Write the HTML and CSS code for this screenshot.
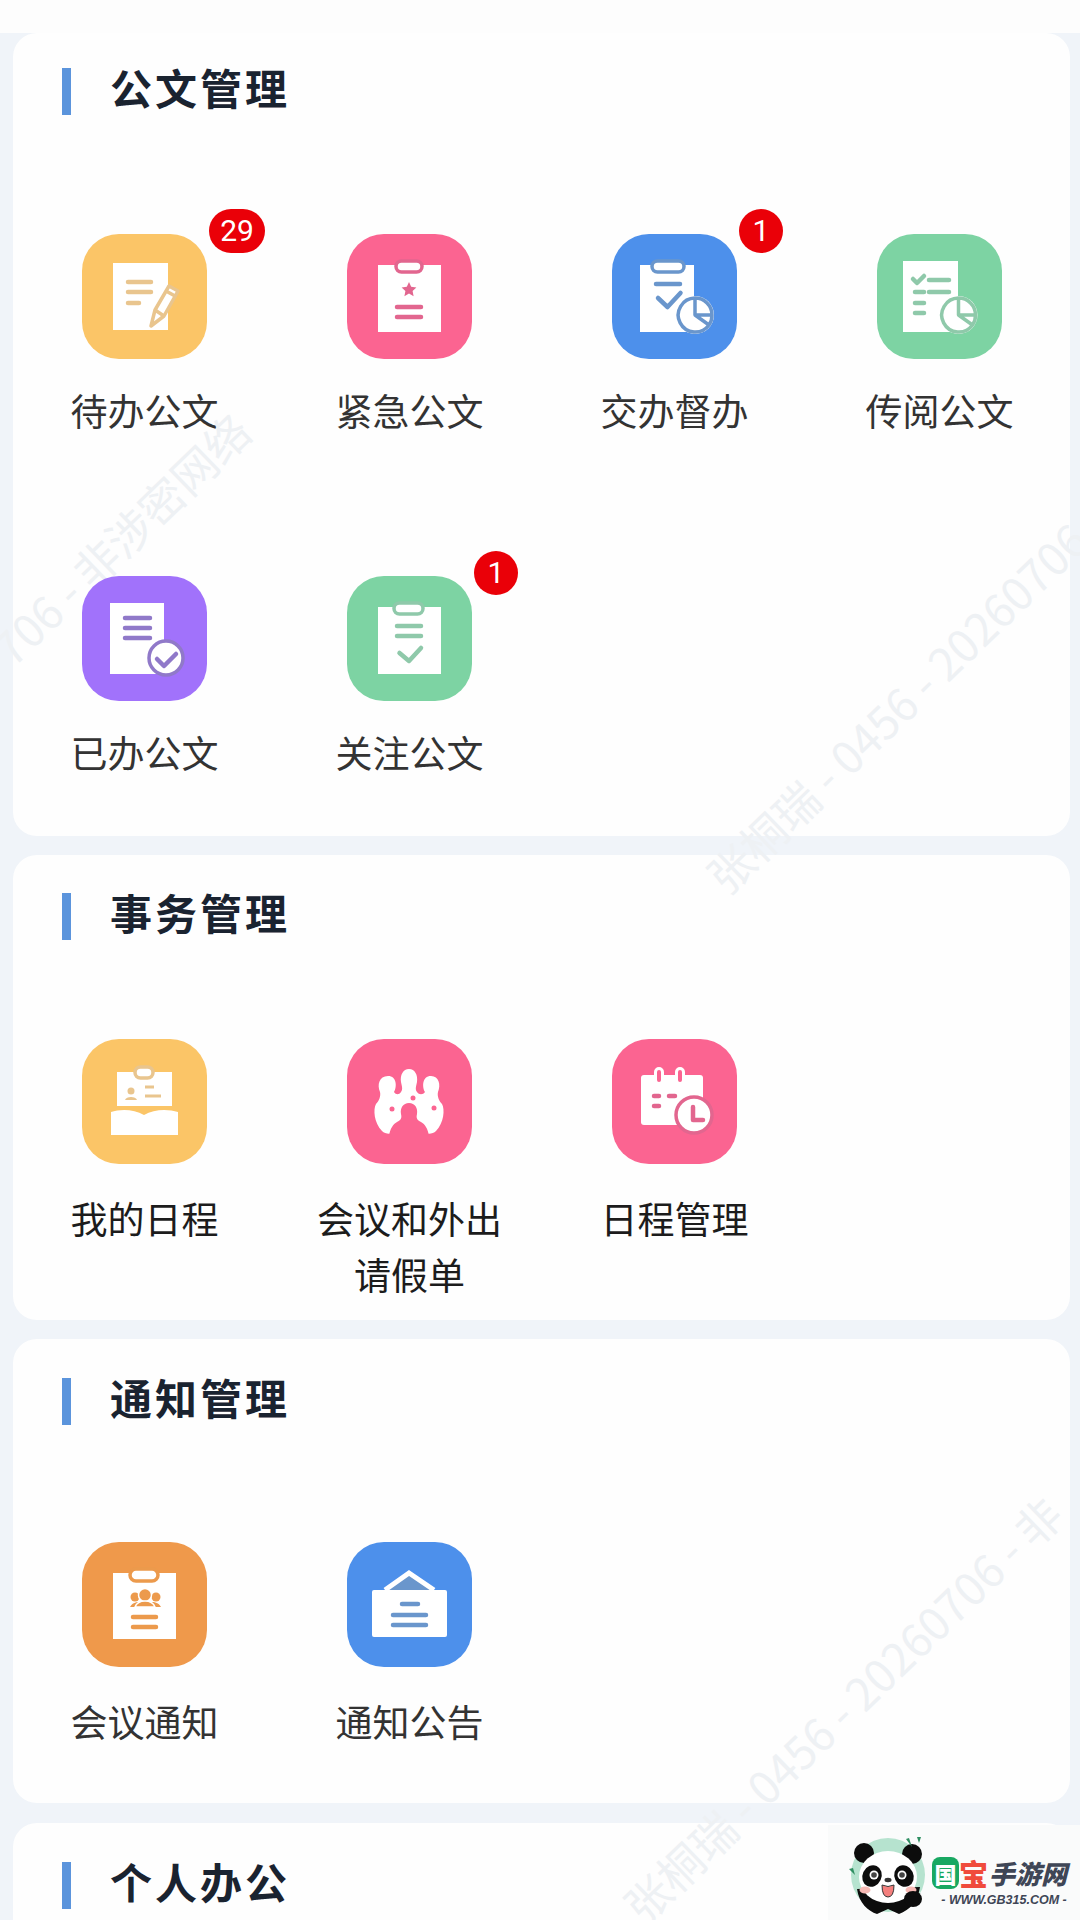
FILE: index.html
```html
<!DOCTYPE html>
<html lang="zh-CN">
<head>
    <meta charset="UTF-8">
    <meta name="viewport" content="width=device-width, initial-scale=1.0">
    <title>办公</title>
    <link rel="stylesheet" href="styles.css">
</head>
<body>
    <div class="page">
        <div class="topbar"></div>

        <section class="card card-doc">
            <h2 class="card-title">公文管理</h2>
            <div class="grid">
                <div class="item">
                    <div class="icon yellow">
                        <svg viewBox="0 0 125 125">
                            <path class="paper" d="M31 29H86V96H31Z"/>
                            <path class="line" d="M46 48H69M46 58H69M46 69H57"/>
                            <path class="thin" d="M73 76L87 52L96 57L82 82L69 92Z"/>
                            <path class="thin" d="M73 76L82 82M84 57L93 62"/>
                        </svg>
                        <span class="badge wide">29</span>
                    </div>
                    <p class="label">待办公文</p>
                </div>
                <div class="item">
                    <div class="icon pink">
                        <svg viewBox="0 0 125 125">
                            <path class="paper" d="M31 31H94V98H31Z"/>
                            <rect class="pill" x="49" y="27" width="26" height="11" rx="5.5"/>
                            <path class="solid" d="M62 48L64.2 52.8L69.4 53.4L65.6 57L66.6 62.2L62 59.6L57.4 62.2L58.4 57L54.6 53.4L59.8 52.8Z"/>
                            <path class="line" d="M50 73H74M50 83H74"/>
                        </svg>
                    </div>
                    <p class="label">紧急公文</p>
                </div>
                <div class="item">
                    <div class="icon blue">
                        <svg viewBox="0 0 125 125">
                            <path class="paper" d="M28 31H82V98H28Z"/>
                            <rect class="pill" x="40" y="27" width="32" height="11" rx="5.5"/>
                            <path class="line" d="M44 50H68"/>
                            <path class="line" d="M46 64L55.5 73L68.5 59"/>
                            <circle class="paper" cx="83" cy="81" r="19"/>
                            <path class="thin" d="M83 64A17 17 0 1 0 97 91M83 64A17 17 0 0 1 100 81H83V64M83 81L97 91A17 17 0 0 0 100 81"/>
                        </svg>
                        <span class="badge">1</span>
                    </div>
                    <p class="label">交办督办</p>
                </div>
                <div class="item">
                    <div class="icon green">
                        <svg viewBox="0 0 125 125">
                            <path class="paper" d="M26 27H81V98H26Z"/>
                            <path class="line" d="M36 45L40 49L47 42"/>
                            <path class="line" d="M52 46H72M38 58H47M52 58H72M38 69H47M38 79H47"/>
                            <circle class="paper" cx="81.500" cy="81" r="19"/>
                            <path class="thin" d="M81.500 64A17 17 0 1 0 95.500 91M81.500 64A17 17 0 0 1 98.500 81H81.500V64M81.500 81L95.500 91A17 17 0 0 0 98.500 81"/>
                        </svg>
                    </div>
                    <p class="label">传阅公文</p>
                </div>
                <div class="item">
                    <div class="icon purple">
                        <svg viewBox="0 0 125 125">
                            <path class="paper" d="M28 27H82V98H28Z"/>
                            <path class="line" d="M43 42H68M43 52H68M43 62H68"/>
                            <circle class="ring" cx="84" cy="82" r="17"/>
                            <path class="line" d="M75 83L82 90L94 78"/>
                        </svg>
                    </div>
                    <p class="label">已办公文</p>
                </div>
                <div class="item">
                    <div class="icon green">
                        <svg viewBox="0 0 125 125">
                            <path class="paper" d="M31 31H94V98H31Z"/>
                            <rect class="pill" x="47" y="27" width="29" height="11" rx="5.500"/>
                            <path class="line" d="M50 50H74M50 60H74"/>
                            <path class="line" d="M52.500 77L62 85L74 72"/>
                        </svg>
                        <span class="badge">1</span>
                    </div>
                    <p class="label">关注公文</p>
                </div>
            </div>
        </section>

        <section class="card card-affair">
            <h2 class="card-title">事务管理</h2>
            <div class="grid">
                <div class="item">
                    <div class="icon yellow">
                        <svg viewBox="0 0 125 125">
                            <path class="paper" d="M35 33H90V67H35Z"/>
                            <rect class="pill" x="53" y="28" width="18" height="11" rx="5.500"/>
                            <circle class="solid" cx="49" cy="52" r="3.500"/>
                            <path class="solid" d="M43 61C44 57 54 57 55 61Z"/>
                            <path class="hair" d="M63 48H72M63 57H79"/>
                            <path class="paper" d="M29 73C38 70 52 70 62 76C72 70 86 70 96 73V96H29Z"/>
                        </svg>
                    </div>
                    <p class="label">我的日程</p>
                </div>
                <div class="item">
                    <div class="icon pink">
                        <svg viewBox="0 0 125 125">
                            <path class="paper" d="M62 30C68 30 71 36 70 43C69 48 68 50 70 53C72 56 76 56 78 53C75 48 75 37 84 37C92 37 94 46 91 53C90 57 92 62 95 65C98 70 97 84 89 92C86 95 80 96 78 93C76 88 72 82 62 82C52 82 48 88 46 93C44 96 38 95 35 92C27 84 26 70 29 65C32 62 34 57 33 53C30 46 32 37 41 37C50 37 50 48 47 53C49 56 52 56 54 53C56 50 55 48 54 43C53 36 56 30 62 30Z"/>
                            <path class="cut" d="M62 64C68 64 71 69 70 75C69 79 70 81 74 83C78 85 81 90 82 97H42C43 90 46 85 50 83C54 81 55 79 54 75C53 69 56 64 62 64Z"/>
                            <circle class="cut" cx="45" cy="70" r="2.500"/>
                            <circle class="cut" cx="87" cy="69" r="2.500"/>
                            <circle class="cut" cx="66" cy="59" r="2.500"/>
                        </svg>
                    </div>
                    <p class="label">会议和外出<br>请假单</p>
                </div>
                <div class="item">
                    <div class="icon pink">
                        <svg viewBox="0 0 125 125">
                            <path class="paper" d="M32 36H88Q91 36 91 39V83Q91 86 88 86H32Q29 86 29 83V39Q29 36 32 36Z"/>
                            <path class="band" d="M47 33V41M68 33V41"/>
                            <path class="band-core" d="M47 33V41M68 33V41"/>
                            <path class="line" d="M42 57H47M57 57H63M42 67H47"/>
                            <circle class="ring" cx="82" cy="76" r="18"/>
                            <path class="line" d="M81 68V81H91"/>
                        </svg>
                    </div>
                    <p class="label">日程管理</p>
                </div>
            </div>
        </section>

        <section class="card card-notice">
            <h2 class="card-title">通知管理</h2>
            <div class="grid">
                <div class="item">
                    <div class="icon orange">
                        <svg viewBox="0 0 125 125">
                            <path class="paper" d="M31 31H94V97H31Z"/>
                            <rect class="pill" x="48" y="27" width="28" height="12" rx="6"/>
                            <circle class="solid" cx="53" cy="55" r="4.500"/>
                            <circle class="solid" cx="74" cy="55" r="4.500"/>
                            <path class="solid" d="M48 65C51 60 55 60 58 60H69C72 60 76 60 79 65Z"/>
                            <circle class="bust" cx="63" cy="53" r="6.500"/>
                            <path class="bust" d="M53 65C55 60 59 59 63 59C67 59 71 60 73 65Z"/>
                            <path class="line" d="M51 75H74M51 85H74"/>
                        </svg>
                    </div>
                    <p class="label">会议通知</p>
                </div>
                <div class="item">
                    <div class="icon blue">
                        <svg viewBox="0 0 125 125">
                            <path class="wire" d="M38 48L62 31L87 48"/>
                            <path class="paper" d="M27 48H98Q100 48 100 50V93Q100 95 98 95H27Q25 95 25 93V50Q25 48 27 48Z"/>
                            <path class="line" d="M55 62H71M46 73H79M46 83H79"/>
                        </svg>
                    </div>
                    <p class="label">通知公告</p>
                </div>
            </div>
        </section>

        <section class="card card-self">
            <h2 class="card-title">个人办公</h2>
        </section>

        <div class="watermark mark-left">706 - 非涉密网络</div>
        <div class="watermark mark-mid">张桐瑞 - 0456 - 20260706</div>
        <div class="watermark mark-low">张桐瑞 - 0456 - 20260706 - 非</div>

        <div class="logo">
            <svg class="panda" viewBox="0 0 80 96">
                <circle cx="40" cy="50" r="37" fill="#b6e3cf"/>
                <path d="M9 64C11 78 20 86 29 89L40 84L51 89C62 85 70 76 72 62Z" fill="#0c0c0c"/>
                <circle cx="16" cy="28" r="10" fill="#0c0c0c"/>
                <circle cx="64" cy="29" r="10" fill="#0c0c0c"/>
                <ellipse cx="40" cy="52" rx="29" ry="26" fill="#fff"/>
                <ellipse cx="24" cy="51" rx="9.500" ry="11" transform="rotate(25 24 51)" fill="#0c0c0c"/>
                <ellipse cx="56" cy="51" rx="9.500" ry="11" transform="rotate(-25 56 51)" fill="#0c0c0c"/>
                <circle cx="26" cy="50" r="4.500" fill="#fff"/>
                <circle cx="54" cy="50" r="4.500" fill="#fff"/>
                <circle cx="26" cy="50" r="2.800" fill="#444"/>
                <circle cx="54" cy="50" r="2.800" fill="#444"/>
                <ellipse cx="40" cy="55" rx="3.500" ry="2.200" fill="#333"/>
                <path d="M34 60Q40 63 46 60Q46 72 40 72Q34 72 34 60Z" fill="#f47f7d" stroke="#333" stroke-width="1"/>
                <ellipse cx="17" cy="65" rx="5.500" ry="3.500" fill="#f7b9b4"/>
                <ellipse cx="63" cy="65" rx="5.500" ry="3.500" fill="#f7b9b4"/>
                <ellipse cx="65" cy="74" rx="9" ry="8" fill="#0c0c0c"/>
                <path d="M58 14L64 22L61 13ZM69 12L71 18L73 12ZM1 44L7 50L5 43Z" fill="#2f8f62"/>
            </svg>
            <div class="logo-text">
                <div class="logo-name"><span class="logo-box">国</span><span class="logo-red">宝</span><span class="logo-dark">手游网</span></div>
                <div class="logo-url">- WWW.GB315.COM -</div>
            </div>
        </div>
    </div>
</body>
</html>
```
FILE: styles.css
```css
* {
    margin: 0;
    padding: 0;
    box-sizing: border-box;
}
html, body {
    width: 1080px;
    height: 1920px;
    overflow: hidden;
}
body {
    font-family: "Noto Sans CJK SC", "Noto Sans", sans-serif;
    background: #f0f4f9;
}

.page {
    position: relative;
    height: 1920px;
    overflow: hidden;
}
.topbar {
    height: 33px;
    background: #fdfdfd;
}

.card {
    margin: 0 10px 19px 13px;
    background: #fefefe;
    border-radius: 24px;
}
.card-doc {
    padding: 35px 0 56px;
}
.card-affair {
    padding: 38px 0 18px;
}
.card-notice {
    padding: 39px 0 54px;
    margin-bottom: 20px;
}
.card-self {
    padding: 39px 0 200px;
}

.card-title {
    display: flex;
    align-items: flex-start;
    height: 47px;
    padding-left: 49px;
    font-size: 42px;
    font-weight: 700;
    line-height: 37px;
    letter-spacing: 3px;
    color: #1a2330;
}
.card-title::before {
    content: "";
    flex-shrink: 0;
    width: 9px;
    height: 47px;
    margin-right: 39px;
    background: #5b94dc;
}

.grid {
    display: grid;
    grid-template-columns: repeat(4, 265px);
    row-gap: 135px;
    margin-left: -1px;
}
.card-doc .grid {
    margin-top: 119px;
    row-gap: 138px;
}
.card-affair .grid {
    margin-top: 99px;
}
.card-notice .grid {
    margin-top: 117px;
}

.item {
    display: flex;
    flex-direction: column;
    align-items: center;
}
.label {
    margin-top: 26px;
    font-size: 37px;
    line-height: 56px;
    text-align: center;
    color: #333;
}
.card-doc .label {
    margin-top: 23px;
}
.card-affair .label {
    color: #1c1c1c;
}

.icon {
    position: relative;
    z-index: 1;
    width: 125px;
    height: 125px;
    border-radius: 37px;
}
.icon svg {
    display: block;
    width: 125px;
    height: 125px;
}
.yellow { background: #fbc567; --ink: #e9c58e; }
.pink { background: #fb6491; --ink: #e2668f; }
.blue { background: #4d90eb; --ink: #6a96cc; }
.green { background: #7dd3a3; --ink: #8fc9aa; }
.purple { background: #a172fb; --ink: #9079c9; }
.orange { background: #ef994b; --ink: #ec9a4c; }

.paper {
    fill: #fff;
}
.solid {
    fill: var(--ink);
}
.cut {
    fill: #fb6491;
}
.bust {
    fill: var(--ink);
    stroke: #fff;
    stroke-width: 1.5;
}
.line {
    fill: none;
    stroke: var(--ink);
    stroke-width: 4.5;
    stroke-linecap: round;
    stroke-linejoin: round;
}
.thin {
    fill: #fff;
    stroke: var(--ink);
    stroke-width: 3.5;
    stroke-linejoin: round;
}
.hair {
    fill: none;
    stroke: var(--ink);
    stroke-width: 3;
}
.pill, .ring {
    fill: #fff;
    stroke: var(--ink);
    stroke-width: 3.5;
}
.band {
    fill: none;
    stroke: #fff;
    stroke-width: 10;
    stroke-linecap: round;
}
.band-core {
    fill: none;
    stroke: #fb6491;
    stroke-width: 4;
    stroke-linecap: round;
}
.wire {
    fill: var(--ink);
    stroke: #fff;
    stroke-width: 5;
}

.badge {
    position: absolute;
    top: -25px;
    left: 127px;
    width: 44px;
    height: 44px;
    border-radius: 22px;
    background: #ea0008;
    color: #fff;
    font-family: Roboto, "Noto Sans", sans-serif;
    font-size: 30px;
    line-height: 43px;
    text-align: center;
}
.badge.wide {
    width: 56px;
}

.watermark {
    position: absolute;
    white-space: nowrap;
    font-size: 45px;
    line-height: 50px;
    color: #eef1f4;
    transform-origin: 0 50%;
    transform: rotate(-44deg);
    pointer-events: none;
}
.mark-left {
    left: 0;
    top: 630px;
}
.mark-mid {
    left: 714px;
    top: 858px;
}
.mark-low {
    left: 631px;
    top: 1888px;
}

.logo {
    position: absolute;
    z-index: 2;
    left: 828px;
    top: 1825px;
    width: 252px;
    height: 95px;
    display: flex;
    background: #fafbfb;
    padding-left: 20px;
}
.panda {
    width: 80px;
    height: 96px;
    flex-shrink: 0;
}
.logo-text {
    margin-left: 4px;
    padding-top: 30px;
}
.logo-name {
    display: flex;
    align-items: center;
    height: 36px;
    font-weight: 900;
}
.logo-box {
    width: 27px;
    height: 32px;
    border-radius: 8px;
    background: #18a862;
    color: #fff;
    font-size: 22px;
    line-height: 32px;
    text-align: center;
}
.logo-red {
    color: #f04b3c;
    font-size: 29px;
    line-height: 36px;
}
.logo-dark {
    margin-left: 1px;
    color: #3f4656;
    font-size: 26px;
    line-height: 36px;
    font-style: italic;
}
.logo-url {
    margin-top: 1px;
    padding-left: 9px;
    font-family: "Liberation Sans", sans-serif;
    font-size: 12.5px;
    font-weight: 700;
    font-style: italic;
    line-height: 16px;
    color: #3f4656;
    text-align: center;
    white-space: nowrap;
}
```
